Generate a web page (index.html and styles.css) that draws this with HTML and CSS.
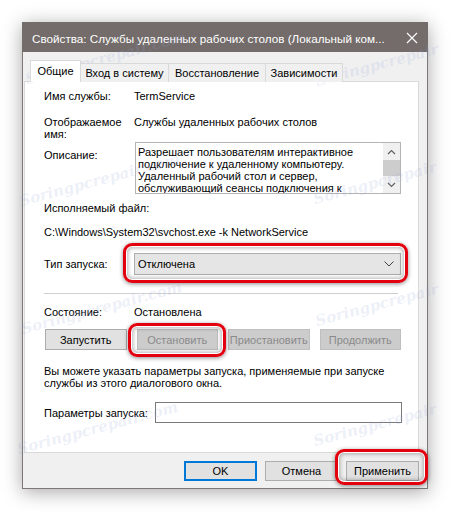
FILE: index.html
```html
<!DOCTYPE html>
<html lang="ru">
  <head>
    <meta charset="UTF-8" />
    <title>Свойства: Службы удаленных рабочих столов</title>
    <link rel="stylesheet" href="styles.css">
  </head>
  <body>
    <div class="window">
      <!-- Title bar -->
      <div class="titlebar">
        <span class="title">Свойства: Службы удаленных рабочих столов (Локальный ком...</span>
        <svg class="close" width="12" height="12" viewBox="0 0 12 12">
          <path d="M1 1L11 11M11 1L1 11" stroke="#fff" stroke-width="1.1" fill="none" />
        </svg>
      </div>

      <div class="content">
        <!-- Tabs -->
        <div class="tabs">
          <div class="tab tab-general active">Общие</div>
          <div class="tab tab-logon">Вход в систему</div>
          <div class="tab tab-recovery">Восстановление</div>
          <div class="tab tab-deps">Зависимости</div>
        </div>

        <!-- General page -->
        <div class="panel">
          <div class="row row-name">
            <span class="label">Имя службы:</span>
            <span>TermService</span>
          </div>
          <div class="row row-display">
            <span class="label">Отображаемое<br>имя:</span>
            <span>Службы удаленных рабочих столов</span>
          </div>
          <div class="row row-desc">
            <span class="label">Описание:</span>
            <div class="desc-box">
              <div class="desc-text">
                Разрешает пользователям интерактивное<br>
                подключение к удаленному компьютеру.<br>
                Удаленный рабочий стол и сервер,<br>
                обслуживающий сеансы подключения к
              </div>
              <div class="scrollbar">
                <div class="sb-arrow">
                  <svg width="9" height="6" viewBox="0 0 9 6"><path d="M1 5L4.5 1.5L8 5" stroke="#606060" stroke-width="1.2" fill="none" /></svg>
                </div>
                <div class="sb-thumb"></div>
                <div class="sb-arrow">
                  <svg width="9" height="6" viewBox="0 0 9 6"><path d="M1 1L4.5 4.5L8 1" stroke="#606060" stroke-width="1.2" fill="none" /></svg>
                </div>
              </div>
            </div>
          </div>
          <div class="line line-exe">Исполняемый файл:</div>
          <div class="line line-path">C:\Windows\System32\svchost.exe -k NetworkService</div>

          <div class="row row-startup">
            <span class="label">Тип запуска:</span>
            <div class="combo">
              <span>Отключена</span>
              <svg width="10" height="6" viewBox="0 0 10 6"><path d="M0.5 0.5L5 5L9.5 0.5" stroke="#444" stroke-width="1" fill="none" /></svg>
              <div class="mark mark-combo"></div>
            </div>
          </div>

          <div class="separator"></div>

          <div class="row row-status">
            <span class="label">Состояние:</span>
            <span>Остановлена</span>
          </div>

          <div class="service-buttons">
            <button class="btn">Запустить</button>
            <button class="btn disabled mark-wrap">Остановить<span class="mark mark-stop"></span></button>
            <button class="btn disabled">Приостановить</button>
            <button class="btn disabled">Продолжить</button>
          </div>

          <p class="hint">Вы можете указать параметры запуска, применяемые при запуске<br>службы из этого диалогового окна.</p>

          <div class="row row-params">
            <span class="label">Параметры запуска:</span>
            <div class="text-input"></div>
          </div>
        </div>

        <!-- Dialog buttons -->
        <div class="footer">
          <button class="btn btn-ok">OK</button>
          <button class="btn">Отмена</button>
          <button class="btn mark-wrap">Применить<span class="mark mark-apply"></span></button>
        </div>
      </div>
    </div>

    <!-- Site watermark -->
    <div class="watermarks">
      <span class="wm wm-1">Soringpcrepair.com</span>
      <span class="wm wm-2">Soringpcrepair</span>
      <span class="wm wm-3">Soringpcrepair.com</span>
      <span class="wm wm-4">Soringpcrepair</span>
      <span class="wm wm-5">Soringpcrepair.com</span>
      <span class="wm wm-6">Soringpcrepair</span>
      <span class="wm wm-7">Soringpcrepair.com</span>
      <span class="wm wm-8">Soringpcrepair</span>
    </div>
  </body>
</html>
```

FILE: styles.css
```css
* {
  margin: 0;
  padding: 0;
  box-sizing: border-box;
}

body {
  width: 450px;
  height: 512px;
  background-color: #fff;
  font-family: "Liberation Sans", Arial, sans-serif;
  font-size: 11px;
  color: #000;
  position: relative;
  overflow: hidden;
}

.window {
  margin: 22px 0 0 22px;
  width: 406px;
  height: 467px;
  border: 1px solid #7d7775;
  border-top: none;
  background-color: #f0f0f0;
  box-shadow: 0 3px 18px rgba(0, 0, 0, 0.35);
}

/* Title bar */
.titlebar {
  height: 30px;
  margin: 0 -1px;
  padding: 0 0 0 10px;
  background-color: #736c6a;
  color: #fff;
  display: flex;
  align-items: center;
  justify-content: space-between;
}

.title {
  padding-top: 3px;
  font-size: 11.7px;
  white-space: nowrap;
}

.close {
  margin-right: 10px;
  margin-top: 2px;
}

.content {
  padding: 8px 8px 0 1px;
}

/* Tabs */
.tabs {
  display: flex;
  align-items: flex-end;
  padding-left: 6px;
  height: 22px;
  position: relative;
  z-index: 1;
}

.tab {
  height: 19px;
  border: 1px solid #d9d9d9;
  border-bottom: none;
  background-color: #f0f0f0;
  text-align: center;
  line-height: 19px;
  margin-left: -1px;
  white-space: nowrap;
}

.tab.active {
  height: 22px;
  line-height: 20px;
  background-color: #fff;
  margin-left: 0;
  z-index: 2;
}

.tab-general {
  width: 51px;
}

.tab-logon {
  width: 89px;
}

.tab-recovery {
  width: 98px;
}

.tab-deps {
  width: 78px;
}

/* Page */
.panel {
  margin-top: -1px;
  height: 372px;
  border: 1px solid #d9d9d9;
  background-color: #fff;
  padding: 7px 17px 0 19px;
}

.row {
  display: grid;
  grid-template-columns: 90px 1fr;
  align-items: start;
}

.row,
.line {
  line-height: 14px;
}

.row-display {
  margin-top: 13px;
  line-height: 12px;
}

.row-desc {
  margin-top: 2px;
}

.row-desc .label {
  margin-top: 6px;
}

.desc-box {
  height: 52px;
  margin-left: 1px;
  border: 1px solid #b4b4b4;
  display: flex;
  overflow: hidden;
}

.desc-text {
  flex-grow: 1;
  padding: 3px 0 0 2px;
  line-height: 12px;
  overflow: hidden;
  white-space: nowrap;
}

.scrollbar {
  width: 17px;
  flex-shrink: 0;
  background-color: #f0f0f0;
  display: flex;
  flex-direction: column;
}

.sb-arrow {
  height: 17px;
  display: flex;
  align-items: center;
  justify-content: center;
}

.sb-thumb {
  height: 16px;
  background-color: #cdcdcd;
}

.line-exe {
  margin-top: 7px;
}

.line-path {
  margin-top: 10px;
}

.row-startup {
  margin-top: 14px;
  align-items: center;
}

.combo {
  position: relative;
  height: 22px;
  border: 1px solid #adadad;
  background-color: #e5e5e5;
  display: flex;
  align-items: center;
  justify-content: space-between;
  padding: 0 6px 0 3px;
}

.separator {
  margin-top: 18px;
  margin-right: 3px;
  height: 1px;
  background-color: #d0d0d0;
}

.row-status {
  margin-top: 11px;
}

/* Buttons */
.btn {
  font-family: inherit;
  font-size: 11px;
  height: 21px;
  border: 1px solid #adadad;
  background-color: #e1e1e1;
  color: #000;
}

.btn.disabled {
  background-color: #cccccc;
  border-color: #bfbfbf;
  color: #8a8a8a;
}

.service-buttons {
  margin-top: 10px;
  display: grid;
  grid-template-columns: repeat(4, 1fr);
  gap: 10px;
  padding-left: 1px;
}

.hint {
  margin-top: 15px;
  line-height: 12px;
  white-space: nowrap;
}

.row-params {
  margin-top: 13px;
  grid-template-columns: 111px 1fr;
  align-items: center;
}

.text-input {
  height: 21px;
  margin-right: -1px;
  border: 1px solid #7a7a7a;
  background-color: #fff;
}

.footer {
  display: flex;
  justify-content: flex-end;
  gap: 8px;
  padding-top: 8px;
}

.footer .btn {
  width: 73px;
  height: 20px;
}

.btn-ok {
  border-color: #0078d7;
  box-shadow: inset 0 0 0 1px #0078d7;
}

/* Red highlight marks drawn over the screenshot */
.mark-wrap {
  position: relative;
}

.mark {
  position: absolute;
  border: 3px solid #e3000f;
  border-radius: 9px;
  box-shadow: 0 1px 4px rgba(0, 0, 0, 0.45), inset 0 0 0 1px #fff, inset 0 0 4px 2px rgba(0, 0, 0, 0.3);
  pointer-events: none;
}

.mark-combo {
  left: -12px;
  right: -8px;
  top: -11px;
  bottom: -9px;
}

.mark-stop {
  left: -10px;
  right: -9px;
  top: -7px;
  bottom: -8px;
}

.mark-apply {
  left: -12px;
  right: -10px;
  top: -13px;
  bottom: -5px;
}

/* Watermark */
.watermarks {
  position: absolute;
  inset: 0;
  pointer-events: none;
}

.wm {
  position: absolute;
  font-family: "DejaVu Serif", serif;
  font-style: italic;
  font-weight: bold;
  font-size: 15px;
  color: rgba(150, 160, 215, 0.18);
  transform: rotate(-15deg);
  transform-origin: left bottom;
  white-space: nowrap;
}

.wm-1 { left: 28px; top: 70px; }
.wm-2 { left: 318px; top: 72px; }
.wm-3 { left: 22px; top: 192px; }
.wm-4 { left: 316px; top: 190px; }
.wm-5 { left: 24px; top: 320px; }
.wm-6 { left: 318px; top: 312px; }
.wm-7 { left: 20px; top: 440px; }
.wm-8 { left: 316px; top: 432px; }
```
